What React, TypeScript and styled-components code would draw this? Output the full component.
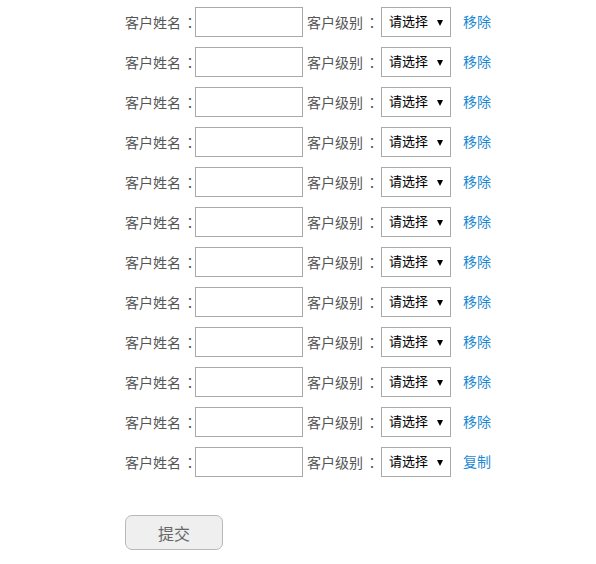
import React, { Component } from "react";
import styled, { createGlobalStyle } from "styled-components";

const GlobalStyle = createGlobalStyle`
  html, body {
    margin: 0;
    padding: 0;
    background: #fff;
  }
  body {
    font-family: "Microsoft YaHei", "Noto Sans CJK SC", "Liberation Sans", sans-serif;
  }
`

const Form = styled.form`
  padding: 7px 0 0 125px;
  display: flex;
  flex-direction: column;
  align-items: flex-start;
`

const Row = styled.div`
  display: flex;
  align-items: center;
  height: 30px;
  margin-bottom: 10px;
`

const Label = styled.label<{ w: number }>`
  color: #555;
  font-size: 14px;
  white-space: nowrap;
  width: ${(p) => p.w}px;
`

// full-width colon sits centred in its cell, as in the original
const Colon = styled.span`
  font-family: "Noto Sans CJK TC", "Noto Sans CJK SC", sans-serif;
  margin-left: 2px;
`

const NameInput = styled.input`
  box-sizing: border-box;
  width: 108px;
  height: 30px;
  border: 1px solid #a9a9a9;
  margin: 0 4px 0 0;
  padding: 0 4px;
  outline: none;
`

const SelectWrap = styled.div`
  position: relative;
  width: 70px;
  height: 30px;

  &::after {
    content: "";
    position: absolute;
    right: 8px;
    top: 13px;
    border-left: 3px solid transparent;
    border-right: 3px solid transparent;
    border-top: 6px solid #000;
    pointer-events: none;
  }
`

const LevelSelect = styled.select`
  box-sizing: border-box;
  appearance: none;
  -webkit-appearance: none;
  width: 100%;
  height: 100%;
  border: 1px solid #a9a9a9;
  background: #fff;
  color: #000;
  font-family: inherit;
  font-size: 13px;
  padding: 0 0 3px 7px;
  border-radius: 0;
  outline: none;
`

const ActionLink = styled.a`
  color: #1a8ad4;
  font-size: 14px;
  margin-left: 12px;
  margin-top: -2px;
  text-decoration: none;
  cursor: pointer;
`

const SubmitButton = styled.button`
  box-sizing: border-box;
  margin-top: 28px;
  width: 98px;
  height: 35px;
  border: 1px solid #b8b8b8;
  border-radius: 7px;
  background: #efefef;
  color: #666;
  font-family: inherit;
  font-size: 16px;
  cursor: pointer;
`

const rows = Array.from({ length: 12 }, (_, i) => i)

class App extends Component {
  render() {
    return (
      <>
        <GlobalStyle />
        <Form onSubmit={(e) => e.preventDefault()}>
          {rows.map((i) => (
            <Row key={i}>
              <Label w={70}>客户姓名<Colon>：</Colon></Label>
              <NameInput type="text" />
              <Label w={74}>客户级别<Colon>：</Colon></Label>
              <SelectWrap>
                <LevelSelect defaultValue="">
                  <option value="">请选择</option>
                  <option value="1">普通</option>
                  <option value="2">VIP</option>
                </LevelSelect>
              </SelectWrap>
              <ActionLink>{i === rows.length - 1 ? "复制" : "移除"}</ActionLink>
            </Row>
          ))}
          <SubmitButton type="submit">提交</SubmitButton>
        </Form>
      </>
    )
  }
}

export default App;
